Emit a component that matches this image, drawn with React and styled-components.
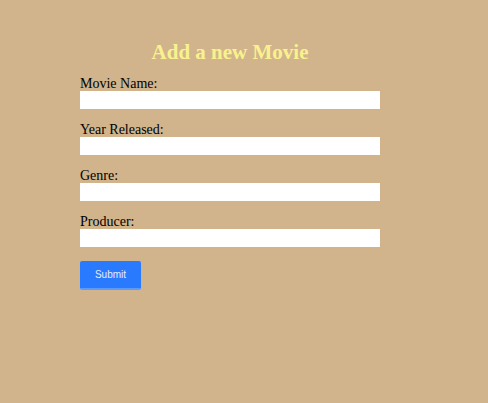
import React from 'react';
import styled, { createGlobalStyle } from 'styled-components';

const GlobalStyle = createGlobalStyle`
   html, body {
      margin: 0;
      padding: 0;
      background-color: #d2b48c;
   }
   body {
      font-family: "Liberation Serif", "DejaVu Serif", serif;
   }
`;

const Page = styled.div`
   min-height: 403px;
   padding: 40px 0 0 80px;
   box-sizing: border-box;
`;

const Form = styled.form`
   width: 300px;
   display: flex;
   flex-direction: column;
`;

const Title = styled.h2`
   margin: 0 0 10px;
   text-align: center;
   font-size: 21px;
   font-weight: bold;
   color: #f8f28e;
`;

const Field = styled.div`
   display: flex;
   flex-direction: column;
   margin-bottom: 12px;
`;

const Label = styled.label`
   padding-top: 2px;
   font-size: 14px;
   line-height: 14px;
   color: #000;
`;

const Input = styled.input`
   width: 300px;
   height: 18px;
   margin: 0;
   padding: 0 4px;
   box-sizing: border-box;
   border: none;
   outline: none;
   background: #fff;
`;

const Button = styled.button`
   margin-top: 2px;
   width: 61px;
   height: 29px;
   border: none;
   border-bottom: 2px solid #5b9bff;
   border-radius: 2px;
   background-color: #2a7aff;
   color: #e4eeff;
   font-family: "Liberation Sans", Arial, sans-serif;
   font-size: 10px;
   padding: 0;
   cursor: pointer;
`;

const fields = ['Movie Name:', 'Year Released:', 'Genre:', 'Producer:'];

const App = () => (
   <>
      <GlobalStyle />
      <Page>
         <Form onSubmit={(e) => e.preventDefault()}>
            <Title>Add a new Movie</Title>
            {fields.map((f) => (
               <Field key={f}>
                  <Label>{f}</Label>
                  <Input type="text" />
               </Field>
            ))}
            <Button type="submit">Submit</Button>
         </Form>
      </Page>
   </>
);

export default App;
